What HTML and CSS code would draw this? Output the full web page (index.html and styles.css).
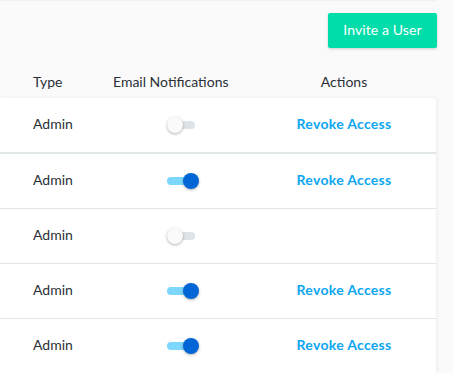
FILE: index.html
```html
<!DOCTYPE html>
<html>
<head>
<meta charset="utf-8">
<link rel="stylesheet" href="styles.css">
</head>
<body>
<div class="page">
  <div class="toolbar">
    <button class="invite-btn">Invite a User</button>
  </div>
  <div class="table-head">
    <div class="col-type">Type</div>
    <div class="col-email">Email Notifications</div>
    <div class="col-actions">Actions</div>
  </div>
  <div class="card">
    <div class="row first">
      <div class="col-type">Admin</div>
      <div class="col-email"><span class="switch"><span class="track"></span><span class="knob"></span></span></div>
      <div class="col-actions"><a class="revoke">Revoke Access</a></div>
    </div>
    <div class="row">
      <div class="col-type">Admin</div>
      <div class="col-email"><span class="switch on"><span class="track"></span><span class="knob"></span></span></div>
      <div class="col-actions"><a class="revoke">Revoke Access</a></div>
    </div>
    <div class="row">
      <div class="col-type">Admin</div>
      <div class="col-email"><span class="switch"><span class="track"></span><span class="knob"></span></span></div>
      <div class="col-actions"></div>
    </div>
    <div class="row">
      <div class="col-type">Admin</div>
      <div class="col-email"><span class="switch on"><span class="track"></span><span class="knob"></span></span></div>
      <div class="col-actions"><a class="revoke">Revoke Access</a></div>
    </div>
    <div class="row last">
      <div class="col-type">Admin</div>
      <div class="col-email"><span class="switch on"><span class="track"></span><span class="knob"></span></span></div>
      <div class="col-actions"><a class="revoke">Revoke Access</a></div>
    </div>
  </div>
</div>
</body>
</html>
```
FILE: styles.css
```css
html, body {
  margin: 0;
  padding: 0;
  background: #fafafa;
  font-family: Lato, "Noto Sans", sans-serif;
  font-size: 14px;
  color: #2b2f38;
  overflow: hidden;
}
.page {
  width: 436px;
  border-top: 1px solid #f1f1f1;
}
.toolbar {
  display: flex;
  justify-content: flex-end;
  padding-top: 12px;
  margin-right: -1px;
}
.invite-btn {
  width: 109px;
  height: 35px;
  border: none;
  border-radius: 2px;
  background: #00dcaa;
  color: #ffffff;
  font-family: Lato, "Noto Sans", sans-serif;
  font-size: 14px;
  letter-spacing: 0.1px;
  box-shadow: 0 1px 3px rgba(0,0,0,0.18);
  padding: 0 0 2px;
}
.table-head, .row {
  display: grid;
  grid-template-columns: 80px 150px 162px;
  padding-left: 33px;
  align-items: center;
}
.table-head {
  height: 30px;
  margin-top: 20px;
}
.table-head > div {
  margin-bottom: 3px;
}
.col-actions {
  text-align: center;
}
.card {
  background: #ffffff;
  border-top-right-radius: 4px;
  box-shadow: 1px 0 4px rgba(0,0,0,0.06);
}
.row {
  height: 54px;
  border-bottom: 1px solid #e1e6e8;
}
.row .col-type, .row .col-actions {
  margin-bottom: 4px;
}
.row.first {
  border-bottom-width: 2px;
}
.row.last {
  border-bottom: none;
}
.revoke {
  color: #0ca6f0;
  font-weight: 700;
  letter-spacing: 0.3px;
  cursor: pointer;
}
.switch {
  position: relative;
  display: block;
  width: 32px;
  height: 16px;
  margin-left: 54px;
}
.track {
  position: absolute;
  left: 0;
  top: 4px;
  width: 28px;
  height: 8px;
  border-radius: 4px;
  background: #dde3e6;
}
.knob {
  position: absolute;
  left: 0;
  top: 0;
  width: 16px;
  height: 16px;
  border-radius: 50%;
  background: #fafafa;
  box-shadow: 0 1px 3px rgba(0,0,0,0.3);
}
.switch.on .track {
  background: #7dd6fb;
}
.switch.on .knob {
  left: 16px;
  background: #0066d6;
}
```
